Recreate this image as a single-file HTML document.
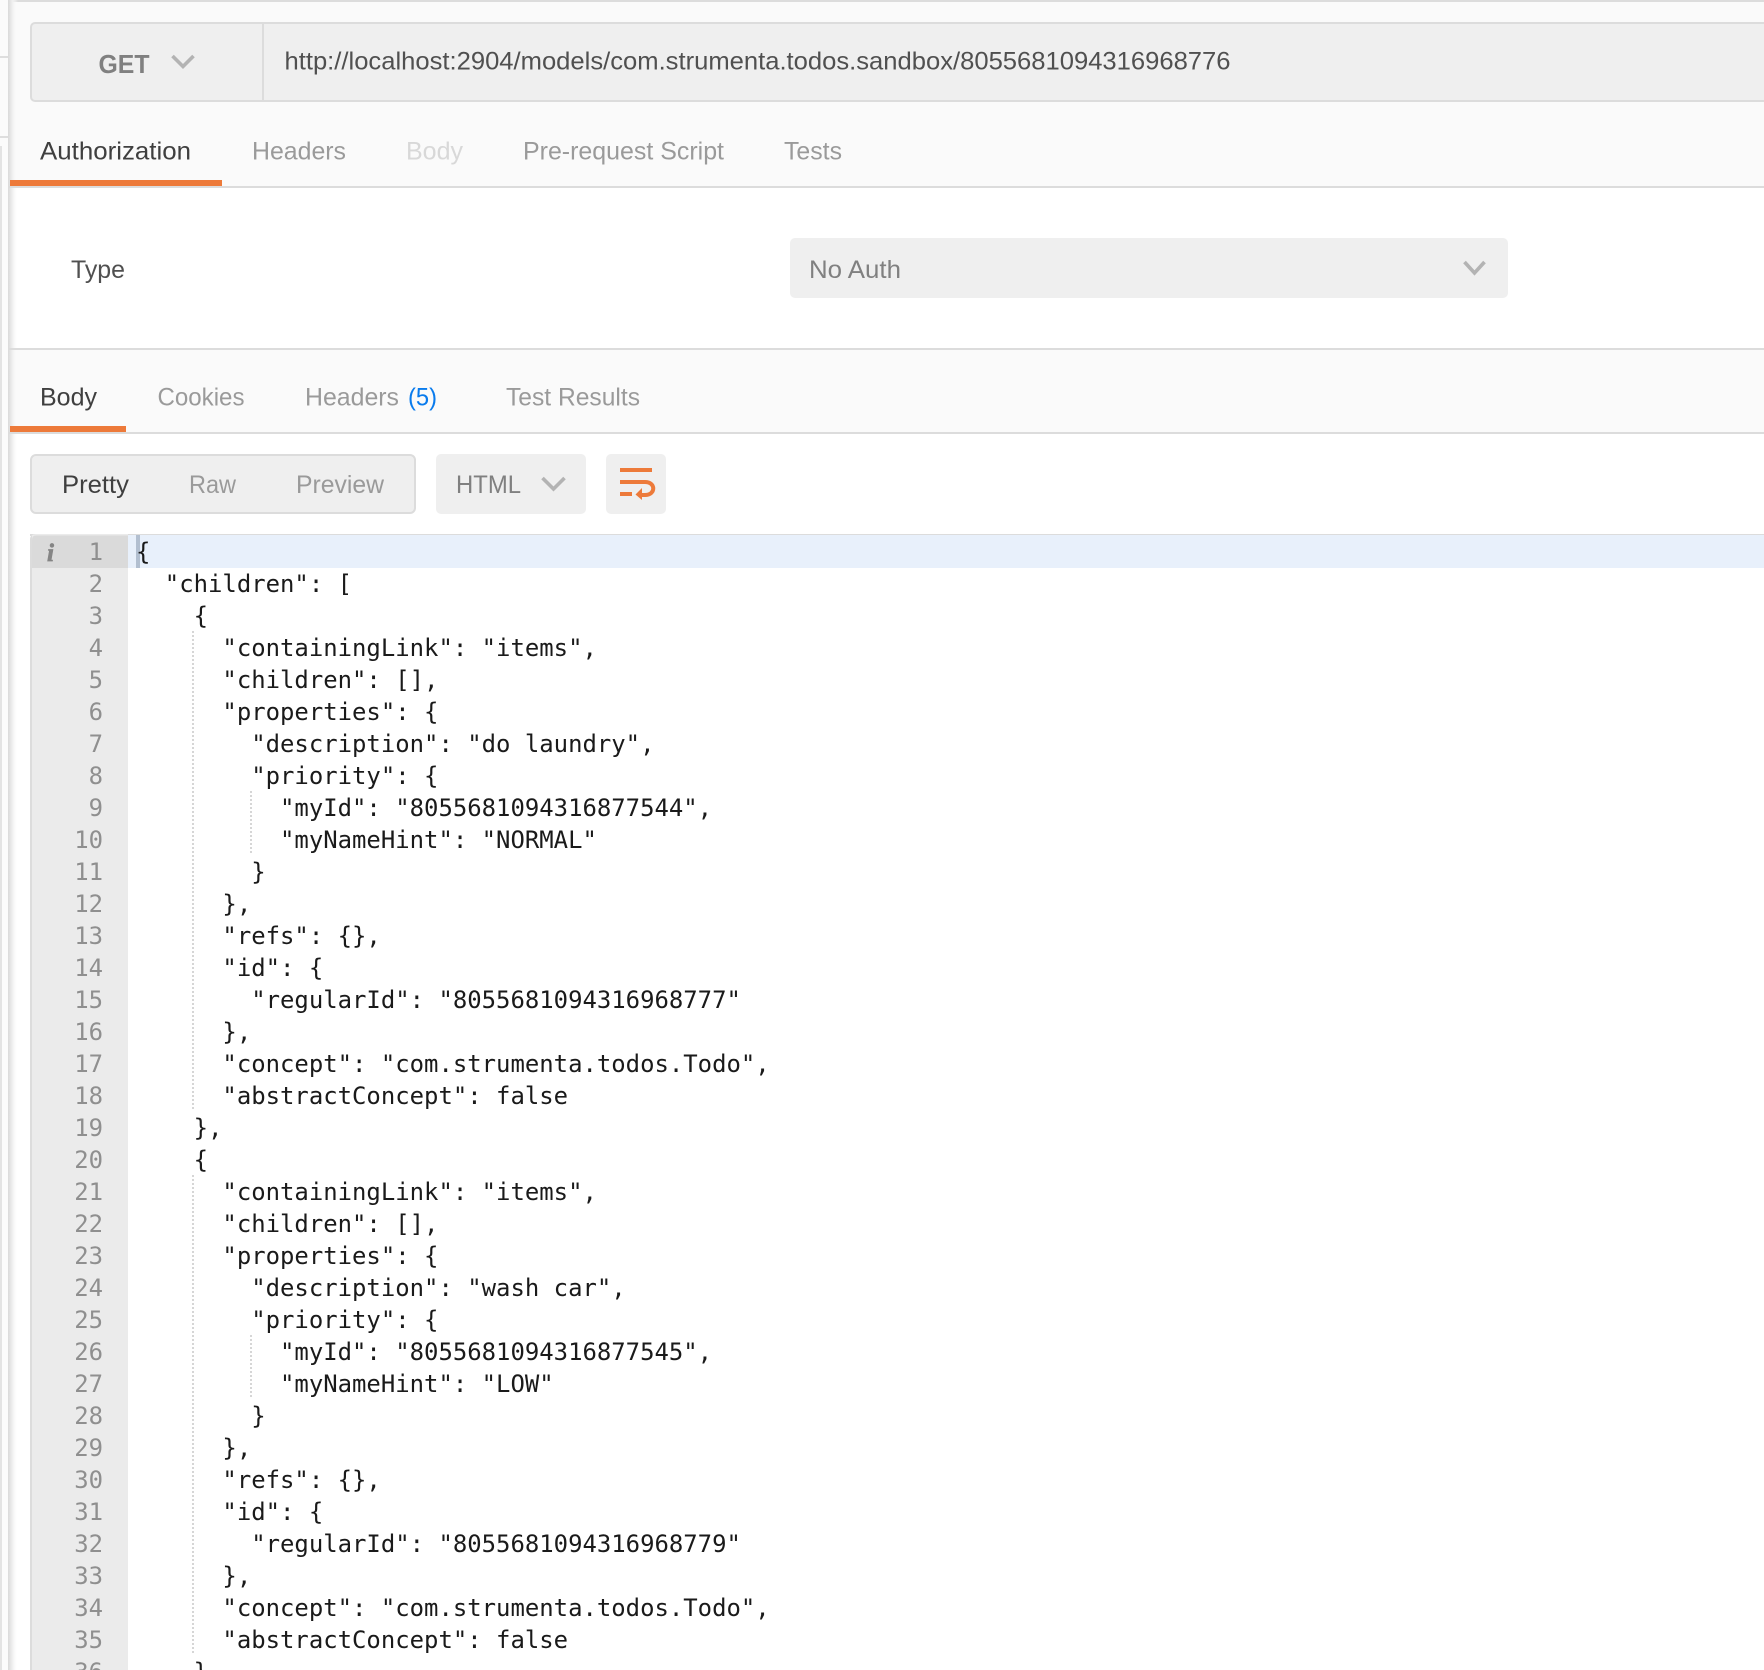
<!DOCTYPE html>
<html lang="en">
<head>
<meta charset="utf-8">
<title>Postman request</title>
<style>
html,body{margin:0;padding:0;background:#fff;width:1764px;height:1670px;overflow:hidden}
#wrap{position:relative;width:1764px;height:1670px;overflow:hidden}
svg{position:absolute;left:0;top:0}
svg text{font-family:"Liberation Sans",sans-serif;font-size:24.6px}
pre{position:absolute;margin:0;font-family:"DejaVu Sans Mono","Liberation Mono",monospace;font-size:23.93px;line-height:32px;white-space:pre}
#code{left:136px;top:536px;color:#1a1a1a}
#nums{left:40px;top:536px;width:63px;text-align:right;color:#8f8f8f}
</style>
</head>
<body>
<div id="wrap">
<svg width="1764" height="1670" viewBox="0 0 1764 1670">
<defs>
<linearGradient id="sh" x1="0" x2="1" y1="0" y2="0">
<stop offset="0" stop-color="#d9d9d9"/><stop offset="0.45" stop-color="#f0f0f0"/><stop offset="1" stop-color="#fff" stop-opacity="0"/>
</linearGradient>
</defs>
<rect width="1764" height="1670" fill="#fff"/>
<!-- left strip -->
<rect x="0" y="0" width="8" height="1670" fill="#fbfbfb"/>
<rect x="0" y="56" width="8" height="2" fill="#dedede"/>
<rect x="0" y="136" width="8" height="2" fill="#dedede"/>
<rect x="0" y="146" width="2" height="1524" fill="#e3e3e3"/>
<!-- top panel -->
<rect x="8" y="2" width="1756" height="184" fill="#fafafa"/>
<rect x="8" y="0" width="1756" height="2" fill="#dcdcdc"/>
<!-- url bar -->
<rect x="31" y="23" width="1760" height="78" rx="4" fill="#efefef" stroke="#dcdcdc" stroke-width="2"/>
<rect x="262" y="23" width="2" height="78" fill="#dcdcdc"/>
<text x="98.500" y="73" font-weight="700" textLength="51" lengthAdjust="spacingAndGlyphs" fill="#808080" style="font-size:26px">GET</text>
<path d="M172.500 56L183 66.500L193.500 56" fill="none" stroke="#b3b3b3" stroke-width="3.600"/>
<text x="284.500" y="69.500" textLength="946" lengthAdjust="spacingAndGlyphs" fill="#505050">http://localhost:2904/models/com.strumenta.todos.sandbox/8055681094316968776</text>
<!-- request tabs -->
<text x="40" y="159.500" textLength="151" lengthAdjust="spacingAndGlyphs" fill="#3f3f3f">Authorization</text>
<text x="252" y="159.500" textLength="94" lengthAdjust="spacingAndGlyphs" fill="#9a9a9a">Headers</text>
<text x="406" y="159.500" textLength="57" lengthAdjust="spacingAndGlyphs" fill="#d8d8d8">Body</text>
<text x="523" y="159.500" textLength="201" lengthAdjust="spacingAndGlyphs" fill="#9a9a9a">Pre-request Script</text>
<text x="784" y="159.500" textLength="58" lengthAdjust="spacingAndGlyphs" fill="#9a9a9a">Tests</text>
<!-- auth type -->
<text x="71" y="278" textLength="54" lengthAdjust="spacingAndGlyphs" fill="#505050">Type</text>
<rect x="790" y="238" width="718" height="60" rx="5" fill="#efefef"/>
<text x="809" y="278" textLength="92" lengthAdjust="spacingAndGlyphs" fill="#808080">No Auth</text>
<path d="M1464.500 262L1474.500 273L1484.500 262" fill="none" stroke="#b3b3b3" stroke-width="3.600"/>
<!-- response tabs -->
<rect x="8" y="350" width="1756" height="82" fill="#fafafa"/>
<text x="40" y="405.500" textLength="57" lengthAdjust="spacingAndGlyphs" fill="#3f3f3f">Body</text>
<text x="157.500" y="405.500" textLength="87" lengthAdjust="spacingAndGlyphs" fill="#9a9a9a">Cookies</text>
<text x="305" y="405.500" textLength="94" lengthAdjust="spacingAndGlyphs" fill="#9a9a9a">Headers</text>
<text x="408" y="405.500" textLength="29" lengthAdjust="spacingAndGlyphs" fill="#097bed">(5)</text>
<text x="506" y="405.500" textLength="134" lengthAdjust="spacingAndGlyphs" fill="#9a9a9a">Test Results</text>
<!-- pretty group -->
<rect x="31" y="455" width="384" height="58" rx="5" fill="#efefef" stroke="#dcdcdc" stroke-width="2"/>
<text x="62" y="493" textLength="67" lengthAdjust="spacingAndGlyphs" fill="#3f3f3f">Pretty</text>
<text x="189" y="493" textLength="47" lengthAdjust="spacingAndGlyphs" fill="#9a9a9a">Raw</text>
<text x="296" y="493" textLength="88" lengthAdjust="spacingAndGlyphs" fill="#9a9a9a">Preview</text>
<!-- html dropdown -->
<rect x="436" y="454" width="150" height="60" rx="5" fill="#efefef"/>
<text x="456" y="493" textLength="65" lengthAdjust="spacingAndGlyphs" fill="#808080">HTML</text>
<path d="M542.500 478L553.500 489L564.500 478" fill="none" stroke="#b3b3b3" stroke-width="3.600"/>
<!-- wrap button -->
<rect x="606" y="454" width="60" height="60" rx="5" fill="#efefef"/>
<g fill="none" stroke="#ed7a3a" stroke-width="4">
<path d="M620 470H652"/>
<path d="M620 482H645C656 482 656 495 645 495H640"/>
<path d="M620 494H632"/>
</g>
<path d="M642 488V500L635.500 494.500Z" fill="#ed7a3a"/>
<!-- editor -->
<rect x="30" y="534" width="1734" height="2" fill="#dcdcdc"/>
<path d="M30 1670V540Q30 534 36 534H128V1670Z" fill="#ebebeb"/>
<path d="M30 1670V540Q30 534 36 534H32V1670Z" fill="#dcdcdc"/>
<path d="M32 568V540Q32 535.500 36 535.500H128V568Z" fill="#dadada"/>
<rect x="128" y="535" width="1636" height="33" fill="#e8f0fb"/>
<rect x="136" y="535" width="4" height="33" fill="#b2bfd0"/>
<text x="47" y="561" fill="#858585" stroke="#858585" stroke-width="0.700" font-style="italic" font-weight="700" style="font-family:'Liberation Serif',serif;font-size:25px">i</text>
<!-- indent guides -->
<g stroke="#d6d6d6" stroke-width="2" stroke-dasharray="2 2" fill="none">
<path d="M193 631V1111"/>
<path d="M193 1175V1655"/>
<path d="M251 791V855"/>
<path d="M251 1335V1399"/>
</g>
<!-- left shadow -->
<rect x="8" y="0" width="10" height="1670" fill="url(#sh)"/>
<!-- tab rules drawn above the shadow -->
<rect x="9" y="186" width="1755" height="2" fill="#dcdcdc"/>
<rect x="9" y="348" width="1755" height="2" fill="#dcdcdc"/>
<rect x="9" y="432" width="1755" height="2" fill="#dcdcdc"/>
<rect x="10" y="180" width="212" height="6" fill="#ed7a3a"/>
<rect x="10" y="426" width="116" height="6" fill="#ed7a3a"/>
</svg>
<pre id="nums">1
2
3
4
5
6
7
8
9
10
11
12
13
14
15
16
17
18
19
20
21
22
23
24
25
26
27
28
29
30
31
32
33
34
35
36</pre>
<pre id="code">{
  "children": [
    {
      "containingLink": "items",
      "children": [],
      "properties": {
        "description": "do laundry",
        "priority": {
          "myId": "8055681094316877544",
          "myNameHint": "NORMAL"
        }
      },
      "refs": {},
      "id": {
        "regularId": "8055681094316968777"
      },
      "concept": "com.strumenta.todos.Todo",
      "abstractConcept": false
    },
    {
      "containingLink": "items",
      "children": [],
      "properties": {
        "description": "wash car",
        "priority": {
          "myId": "8055681094316877545",
          "myNameHint": "LOW"
        }
      },
      "refs": {},
      "id": {
        "regularId": "8055681094316968779"
      },
      "concept": "com.strumenta.todos.Todo",
      "abstractConcept": false
    },</pre>
</div>
</body>
</html>
